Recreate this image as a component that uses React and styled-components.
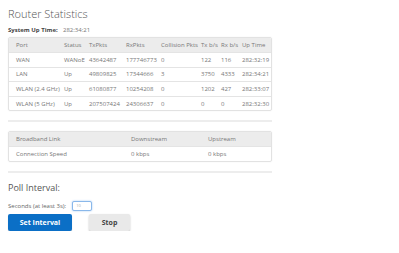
import React from 'react';
import styled, { createGlobalStyle } from 'styled-components';

const GlobalStyle = createGlobalStyle`
  body {
    margin: 0;
    background: #fff;
    font-family: "Open Sans", "Liberation Sans", sans-serif;
    color: #777;
  }
`;

const Page = styled.div`
  padding: 7px 8px 0;
  width: 264px;
`;

const Title = styled.h1`
  margin: 0;
  font-size: 11px;
  line-height: 14px;
  font-weight: 300;
  color: #555;
`;

const UpTime = styled.div`
  display: flex;
  margin-top: 2px;
  height: 14px;
  align-items: center;
  font-size: 6px;

  b {
    width: 55px;
    color: #444;
    font-weight: 700;
  }
`;

const Box = styled.div`
  margin-top: ${(p) => p.top || 0}px;
  border: 1px solid #e2e2e2;
  border-radius: 2px;
  box-shadow: 0 0 2px rgba(0, 0, 0, 0.06);
  overflow: hidden;
`;

const Table = styled.table`
  width: 100%;
  table-layout: fixed;
  border-collapse: collapse;
  font-size: 6px;
  color: #777;

  th {
    background: #ececec;
    font-weight: 400;
    text-align: left;
    height: 14px;
    padding: 0 0 0 4px;
    white-space: nowrap;
  }

  td {
    height: 13.6px;
    padding: 0 0 0 4px;
    border-top: 1px solid #e4e4e4;
    white-space: nowrap;
  }

  th:first-child,
  td:first-child {
    padding-left: 7px;
  }
`;

const Rule = styled.hr`
  margin: ${(p) => p.top}px 0 0;
  border: none;
  height: 2px;
  background: #ededed;
`;

const PollTitle = styled.h2`
  margin: 8px 0 0;
  font-size: 9px;
  line-height: 13px;
  font-weight: 400;
  color: #555;
`;

const Field = styled.div`
  display: flex;
  align-items: center;
  margin-top: 7px;
  font-size: 6px;
  color: #666;
  gap: 6px;
`;

const Input = styled.input`
  width: 20px;
  height: 10px;
  box-sizing: border-box;
  border: 1px solid #8ab8ea;
  border-radius: 2px;
  box-shadow: 0 0 2px #9cc4f0;
  font-size: 4px;
  padding: 0 3px;
  color: #aaa;
  font-family: inherit;
  outline: none;
`;

const Actions = styled.div`
  display: flex;
  gap: 17px;
  margin-top: 3px;
`;

const Button = styled.button`
  height: 17px;
  width: ${(p) => p.w}px;
  border: none;
  border-radius: 2px;
  font-family: inherit;
  font-weight: 700;
  font-size: 7px;
  padding: 0;
  cursor: pointer;
  background: ${(p) => (p.primary ? '#0b6fc6' : '#e9e9e9')};
  color: ${(p) => (p.primary ? '#fff' : '#444')};
  box-shadow: ${(p) => (p.primary ? '0 1px 1px rgba(0,0,0,0.2)' : '0 1px 2px rgba(0,0,0,0.25)')};
`;

const ports = [
  ['WAN', 'WANoE', '43642487', '177746773', '0', '122', '116', '282:32:19'],
  ['LAN', 'Up', '49809825', '17344666', '3', '3750', '4333', '282:34:21'],
  ['WLAN (2.4 GHz)', 'Up', '61080877', '10254208', '0', '1202', '427', '282:33:07'],
  ['WLAN (5 GHz)', 'Up', '207507424', '24306637', '0', '0', '0', '282:32:30'],
];

const heads = ['Port', 'Status', 'TxPkts', 'RxPkts', 'Collision Pkts', 'Tx b/s', 'Rx b/s', 'Up Time'];
const widths = [51, 25, 37, 35, 40, 20, 21, 35];

const App = () => {
  return (
    <Page>
      <GlobalStyle />
      <Title>Router Statistics</Title>
      <UpTime>
        <b>System Up Time:</b>
        <span>282:34:21</span>
      </UpTime>

      <Box top={0}>
        <Table>
          <colgroup>
            {widths.map((w, i) => (
              <col key={i} style={{ width: w }} />
            ))}
          </colgroup>
          <thead>
            <tr>
              {heads.map((h) => (
                <th key={h}>{h}</th>
              ))}
            </tr>
          </thead>
          <tbody>
            {ports.map((row) => (
              <tr key={row[0]}>
                {row.map((cell, i) => (
                  <td key={i}>{cell}</td>
                ))}
              </tr>
            ))}
          </tbody>
        </Table>
      </Box>

      <Rule top={9} />

      <Box top={9}>
        <Table>
          <colgroup>
            <col style={{ width: 118 }} />
            <col style={{ width: 77 }} />
            <col style={{ width: 69 }} />
          </colgroup>
          <thead>
            <tr>
              <th>Broadband Link</th>
              <th>Downstream</th>
              <th>Upstream</th>
            </tr>
          </thead>
          <tbody>
            <tr>
              <td>Connection Speed</td>
              <td>0 kbps</td>
              <td>0 kbps</td>
            </tr>
          </tbody>
        </Table>
      </Box>

      <Rule top={9} />

      <PollTitle>Poll Interval:</PollTitle>
      <Field>
        <label htmlFor="poll">Seconds (at least 3s):</label>
        <Input id="poll" defaultValue="10" />
      </Field>
      <Actions>
        <Button primary w={64}>Set Interval</Button>
        <Button w={41}>Stop</Button>
      </Actions>
    </Page>
  );
};

export default App;
